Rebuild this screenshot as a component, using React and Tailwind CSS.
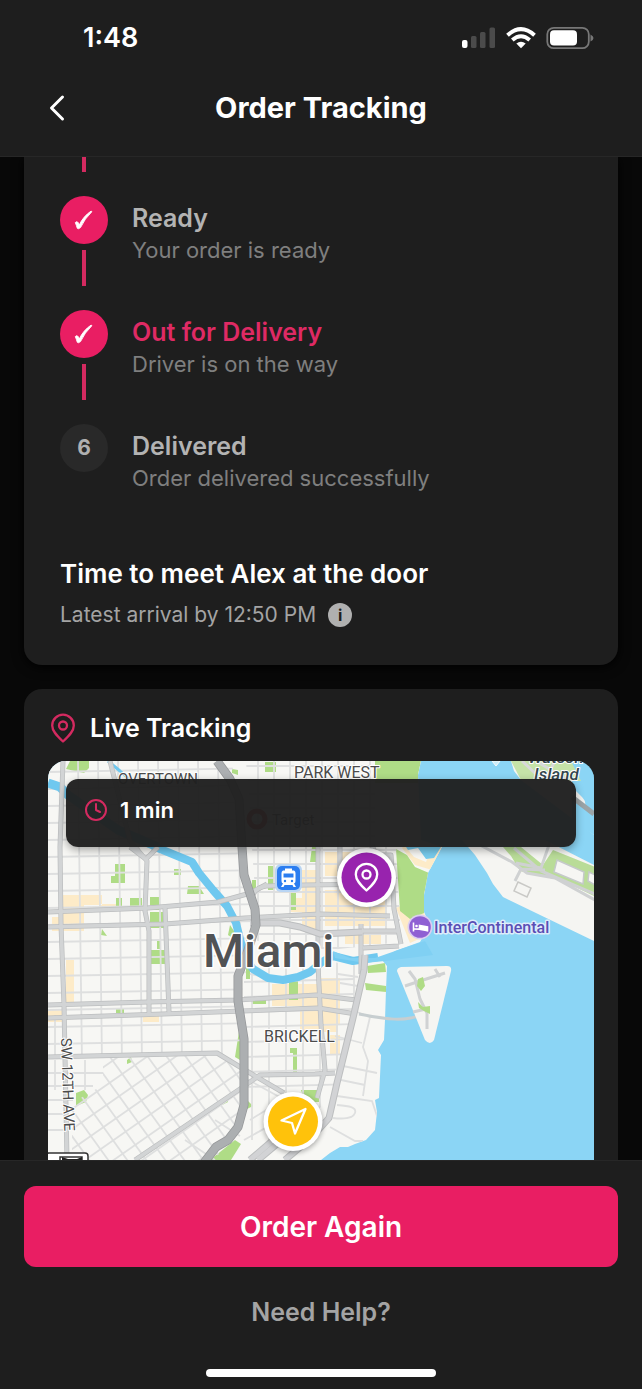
import { Clock } from "lucide-react";

const steps = [
  { title: "Ready", text: "Your order is ready", state: "done" },
  { title: "Out for Delivery", text: "Driver is on the way", state: "current" },
  { title: "Delivered", text: "Order delivered successfully", state: "todo", number: 6 },
];

function StatusBar() {
  return (
    <div className="flex h-[76px] items-center justify-between pr-12 pl-[83px] text-white">
      <span className="text-[27px] leading-8 font-semibold">1:48</span>
      <svg className="h-7 w-[134px]" viewBox="460 24 134 28" aria-label="Signal, Wi-Fi and battery">
        <rect x="462" y="40" width="5.5" height="8" rx="2" fill="#fff" />
        <rect x="471" y="36" width="5.5" height="12" rx="1.5" fill="#4b4b4b" />
        <rect x="480" y="32" width="5.5" height="16" rx="1.5" fill="#4b4b4b" />
        <rect x="489.500" y="27.500" width="5.500" height="20.500" rx="1.500" fill="#4b4b4b" />
        <g fill="none" stroke="#fff" strokeWidth="4">
          <path d="M507.500 35.200Q521 23 534.500 35.200" />
          <path d="M512.300 39.900Q521 32.500 529.700 39.900" />
        </g>
        <path d="M516.300 43.500Q521 39.800 525.700 43.500L521 48.200Z" fill="#fff" />
        <rect x="547.300" y="27.800" width="41.500" height="20.400" rx="6.500" fill="none" stroke="#777" strokeWidth="1.800" />
        <rect x="550" y="30.300" width="27" height="15.300" rx="4" fill="#fff" />
        <path d="M590.500 34.500Q593.500 36 593.500 38T590.500 41.500Z" fill="#777" />
      </svg>
    </div>
  );
}

function Step({ step, last }) {
  const done = step.state !== "todo";
  return (
    <li className="flex gap-6">
      <div className="flex w-12 shrink-0 flex-col items-center">
        <div className={done ? "flex size-12 items-center justify-center rounded-full bg-[#e91e63] text-white" : "flex size-12 items-center justify-center rounded-full bg-[#292929] text-[#b0b0b0]"}>
          {done ? (
            <svg viewBox="0 0 48 48" className="size-12" aria-label="Completed">
              <path d="M15.300 26.600Q17.600 24 19.300 29Q23 20.500 31.200 15L31.800 15.800Q24.800 22.500 20.500 31.600Q18.300 33.500 17.300 32.300Q16.500 29.500 15.300 26.600Z" fill="currentColor" stroke="currentColor" strokeWidth="0.900" strokeLinejoin="round" />
            </svg>
          ) : (
            <span className="text-[21px] leading-6 font-bold">{step.number}</span>
          )}
        </div>
        {!last && <div className="mt-1.5 mb-6 h-9 w-1 bg-[#d42a60]" />}
      </div>
      <div className="pt-1">
        <h2 className={step.state === "current" ? "text-[25px] leading-9 font-semibold text-[#df2a64]" : "text-[25px] leading-9 font-semibold text-[#b3b3b3]"}>{step.title}</h2>
        <p className="text-[22px] leading-7 text-[#7f7f7f]">{step.text}</p>
      </div>
    </li>
  );
}

const range = (from, to, by) => Array.from({ length: Math.floor((to - from) / by) + 1 }, (_, i) => from + i * by);

function CityMap() {
  return (
    <svg className="block h-[399px] w-full" viewBox="48 761 546 399" preserveAspectRatio="xMidYMid slice" role="img" aria-label="Map of Miami">
      <defs>
        <clipPath id="land">
          <path d="M48 761H421L418 775L421 840L442 847L428 873L424 895L424 912L430 925L420 942L395 951L382 960L387 966L386 990L385 1020L384 1040L378 1050L381 1055L379 1098L375 1100L377 1112L375 1130L366 1140L355 1144L348 1147L340 1147L330 1153L321 1160H48Z" />
        </clipPath>
        <clipPath id="west">
          <path d="M48 761H232L245 870L258 915L240 1000V1055L217 1054L48 1058Z" />
        </clipPath>
        <clipPath id="southwest">
          <path d="M103 1058L217 1055L240 1068V1120L215 1160H72V1103L103 1085Z" />
        </clipPath>
        <clipPath id="downtown">
          <path d="M246 761H375V847H396L401 942L330 950L250 940L256 905Z" />
        </clipPath>
        <clipPath id="brickell">
          <path d="M250 950L360 966L345 1045L332 1100L240 1160V1000Z" />
        </clipPath>
        <clipPath id="dodge">
          <path d="M462 840L475 855L487 873L493 884L503 897L594 941V865L545 840Z" />
        </clipPath>
        <filter id="soft"><feGaussianBlur stdDeviation="2.500" /></filter>
      </defs>

      <rect x="48" y="761" width="546" height="399" fill="#8bd5f5" />
      <g clipPath="url(#land)">
        <rect x="48" y="761" width="546" height="399" fill="#f7f7f4" />

        <g fill="#fdebc8">
          <path d="M62 895h40v10h-18v26h-32v-14h10zM80 901h20v8h18v-5h-18zM66 960h8v46h-8zM48 1010h15v12H48zM143 1016h16v6h-16zM290 898h28v14h-28zM302 870h14v60h-14zM325 852h50v24h-50zM325 890h60v36h-60zM345 930h36v14h-36zM272 984h48v22h-48zM318 978h22v46h-22zM300 998h38v34h-38zM330 1035h10v20h-10zM396 908l10-5 18 8 4 24-18 8z" />
          <path d="M402 848l13 17 17 5 10-23h-10l-6 15-12-5-10-12z" />
        </g>
        <g fill="#afdc86">
          <path d="M375 761h46l-3 14v8h-43zM396 849l11 6 8 12 14 6-5 22v18l-14 6-10-8z" />
          <path d="M70 761h19v7l-5 5-18-4zM115 864h10v19h-14v-7h4zM116 898h6v10h-6zM130 898h12v10h-12zM150 897h10v13h-10zM150 912h16v16h-16zM151 950h16v14h-16zM157 941h3v8h-3zM174 869h7v6h-7zM188 886h11l5 8h-17zM102 929l5 7-6-1zM116 1009h8v4h-8zM268 866h6v24h-6zM252 880h4v12h-4zM290 886h6v24h-6zM265 762h11v10h-11zM232 769l6 1 0 5-6-2zM312 847h4v15h-6zM289 975h9v25h-9zM252 1000h14v4h-14zM246 965h4v14h-4zM230 925l4 6v8l-6-4zM76 1093l8-3 4 5-2 7-10 4zM127 1060l4-3 1 5-5 2zM220 1102l8-5v5l-6 3zM240 1025l6 0-1 38-10-6zM245 1098l8 8-8 4zM210 1160l25-20 6 4-10 16zM290 1048h7v25h-4v-20h-3zM301 1090h18v12h-14zM367 966l18-3 1 9-18 1zM365 983l21 3v6l-20-2z" />
        </g>

        <g stroke="#dedfdf" strokeWidth="1.800" fill="none">
          <g clipPath="url(#west)">
            {range(78, 240, 20).map((x) => <path key={x} d={`M${x} 761l4 300`} />)}
            {range(770, 1060, 17).map((y) => <path key={y} d={`M48 ${y + 2}L260 ${y - 2}`} />)}
          </g>
          <g clipPath="url(#southwest)">
            {range(0, 20, 1).map((n) => <path key={n} d={`M${10 + n * 19} 1050l90 125`} />)}
            {range(0, 16, 1).map((n) => <path key={n} d={`M48 ${1066 + n * 20}l200 -140`} />)}
          </g>
          <g clipPath="url(#downtown)">
            {range(258, 400, 16).map((x) => <path key={x} d={`M${x} 761v190`} />)}
            {range(766, 950, 14).map((y) => <path key={y} d={`M244 ${y}h160`} />)}
          </g>
          <g clipPath="url(#brickell)">
            {range(252, 360, 17).map((x) => <path key={x} d={`M${x} 960v180`} />)}
            {range(982, 1100, 15).map((y) => <path key={y} d={`M244 ${y}l110 -3`} />)}
          </g>
          <path d="M48 1073h55M48 1086h45M48 1100h25M48 1114h16M48 1130h16M55 1060v30M55 1015v40M85 1060v30M245 1078l40 22M250 1120l26-16M244 1140l50-28M215 1120l25 16M185 1140l30 20" />
          <path d="M357 1012l13 5-7 30 5 14-5 35M335 1036l27 7M343 1066l34 7M341 1080l24 5M337 1096l35 5 5 15M337 1105c12 1 20 2 18 8s-14 6-22 5M330 1127l25 14 8 0M250 974l30 6M338 974l20 3M340 983l18 3" />
        </g>
      </g>

      <g fill="none" stroke="#6fc8ef" strokeLinejoin="round">
        <path d="M48 783l12 4 8 8 50 35 40 17" strokeWidth="9" />
        <path d="M108 761l12 10 9 8" strokeWidth="3" />
        <path d="M153 846l17 7 22 9 7 11 14 17 14 16 9 17 5 20 3 13 9 13 15 9 15 2 15-3 12-5 12-10 11-6 20 5 25-4" strokeWidth="8" />
      </g>
      <path d="M333 951l17 7 25 0 26-9 24-8 8 14-48 6-20 2-30-5z" fill="#80d0f3" />
      <path d="M408 850l10-2 8 11 8-1 7-11h-35z" fill="#77cbed" />

      <g fill="none" strokeLinejoin="round">
        <g stroke="#bcbebf" strokeWidth="5">
          <path d="M63 761L60 847L61 925L64 1005L67 1160M110 761l20 80 17 20-2 50 4 20v82M165 908l4 104M158 847l-12 12M130 847l17 13" />
          <path d="M48 912l100-4 70-6 29-8 11-5 9-5M48 927l117-3 80-6 75-4 70 2M48 1005l100-3 90-2 78-5 40 5M48 1018l115-4 155-6 38 6" />
          <path d="M48 1057l169-4 28 17 39 23M135 1160l105-71 20-14 55-1 20-1M253 895q2-7 13-9l40-1 80-1M318 845v120l3 60 4 45-8 28M340 847v30M361 924v50M372 845l4 10 15 0 3 54 7 35M361 931h38M363 948l36-2" />
        </g>
        <g stroke="#d2d4d5" strokeWidth="3.600">
          <path d="M63 761L60 847L61 925L64 1005L67 1160M110 761l20 80 17 20-2 50 4 20v82M165 908l4 104M158 847l-12 12M130 847l17 13" />
          <path d="M48 912l100-4 70-6 29-8 11-5 9-5M48 927l117-3 80-6 75-4 70 2M48 1005l100-3 90-2 78-5 40 5M48 1018l115-4 155-6 38 6" />
          <path d="M48 1057l169-4 28 17 39 23M135 1160l105-71 20-14 55-1 20-1M253 895q2-7 13-9l40-1 80-1M318 845v120l3 60 4 45-8 28M340 847v30M361 924v50M372 845l4 10 15 0 3 54 7 35M361 931h38M363 948l36-2" />
        </g>
        <path d="M365 955l-1 15-11 48-16 65-8 35-17 19-27 23M250 923h30l20 4 20 7 42-2M285 1130l-35 30M258 1160l45-38" stroke="#bcbebf" strokeWidth="7" />
        <path d="M365 955l-1 15-11 48-16 65-8 35-17 19-27 23M250 923h30l20 4 20 7 42-2M285 1130l-35 30M258 1160l45-38" stroke="#d2d3d5" strokeWidth="5" />
        <path d="M217 761l13 18 9 20 3 48 2 28 11 34 1 16-8 25-10 26 0 25 6 38 0 66-6 22-10 13-12 7-13 17" stroke="#96989a" strokeWidth="9" />
        <path d="M217 761l13 18 9 20 3 48 2 28 11 34 1 16-8 25-10 26 0 25 6 38 0 66-6 22-10 13-12 7-13 17" stroke="#acafb1" strokeWidth="7.500" />
      </g>

      <g>
        <path d="M511 761l3 10 7 9 73 55V813l-12-16-10-10v-26z" fill="#f4f4f1" />
        <path d="M511 761h60l10 20-60-1z" fill="#c5e3a8" />
        <path d="M522 761l15 14M536 761l32 19M555 761l-10 19" stroke="#d8d9da" strokeWidth="3" />
        <path d="M492 761l4 5 4-5z" fill="#c9edf9" stroke="#f8f8f8" />
        <path d="M582 782l12-8v35h-8z" fill="#8bd5f5" />
        <path d="M572 797l22 15v23l-22-14z" fill="#8bd5f5" />
        <path d="M572 797l22 17" stroke="#9ba4a7" strokeWidth="5" />
        <g clipPath="url(#dodge)">
          <rect x="455" y="840" width="140" height="105" fill="#f5f5f2" />
          <path d="M503 847l18 0 22 18 10-15 45 18v30l-35-17-43-10-9-15z" fill="#b9dc98" />
          <path d="M480 845l32 17 15 11 28 5 40 22M550 842l-9 26-25-5M545 870l-24-1-6 12M514 848l27 23 54 23" fill="none" stroke="#cfd1d2" strokeWidth="3" />
          <path d="M557 860l27 12-1 12-29-12z" fill="#f6f6f3" stroke="#c5c9ca" strokeWidth="1.500" />
          <path d="M589 872l6 3v10l-7-4z" fill="#f6f6f3" stroke="#c5c9ca" strokeWidth="1.500" />
          <path d="M518 882l13 6-4 9-13-6z" fill="#f5f5f2" stroke="#c9c9c6" strokeWidth="1.500" />
        </g>
      </g>

      <path d="M359 1014c25 5 48 9 66-1" fill="none" stroke="#c7ced0" strokeWidth="3" />
      <path d="M397 971q0-3 4-4l46-1q5 0 4 5l-17 69q-4 6-9 0z" fill="#f5f5f2" />
      <g fill="none" stroke="#d0d2d3" strokeWidth="3">
        <path d="M409 971l6 8 5 20 7 14 0 16M405 986l12-4 28-9M435 969l5 8M413 1012l13-3" />
      </g>
      <path d="M418 979l5-2 2 9-4 5-4-5zM418 1002l5 5 7-1 0 8-6-3-5-3z" fill="#afdc86" />

      <g fontFamily="Roboto, sans-serif" stroke="#fff" strokeLinejoin="round" paintOrder="stroke">
        <g fontSize="15" fill="#4b4b4b" strokeWidth="2">
          <text x="118" y="784" fontSize="15">OVERTOWN</text>
          <text x="294" y="778" fontSize="16">PARK WEST</text>
          <text x="264" y="1042" fontSize="16">BRICKELL</text>
          <text fontSize="15" transform="translate(61 1038) rotate(88)">SW 12TH AVE</text>
        </g>
        <g fill="#33464e" strokeWidth="2" fontWeight="500" fontStyle="italic" fontSize="17">
          <text x="528" y="763">Watson</text>
          <text x="534" y="780">Island</text>
        </g>
        <text x="203" y="967" fontSize="47" fontWeight="500" fill="#515355" strokeWidth="3">Miami</text>
        <text x="434" y="933" fontSize="16" fontWeight="500" fill="#5a4fb5" stroke="#dcecfb" strokeWidth="3">InterContinental</text>
        <text x="272" y="825" fontSize="15" fill="#444" strokeWidth="2">Target</text>
      </g>
      <circle cx="257" cy="819" r="8" fill="none" stroke="#cc2727" strokeWidth="5" />

      <rect x="275" y="864" width="27" height="28" rx="6" fill="#b9d5f3" />
      <rect x="277" y="866" width="23" height="24" rx="5" fill="#2b7df0" />
      <path d="M285 868.500h7v2h2q1.500.5 1.500 2.500v8q0 2-1.500 2.500l2 3.500h-2.500l-1-2h-8l-1 2H281l2-3.500q-1.500-.5-1.500-2.500v-8q0-2 1.500-2.500h2z" fill="#fff" />
      <path d="M283.500 873.500h10v4h-10z" fill="#2b7df0" />
      <circle cx="285" cy="881" r="1.200" fill="#2b7df0" />
      <circle cx="292" cy="881" r="1.200" fill="#2b7df0" />

      <circle cx="420" cy="927" r="12.500" fill="#dccdf1" />
      <circle cx="420" cy="927" r="10.800" fill="#8f5fd3" />
      <path d="M413.500 922.500v9M413.500 929h14v2.500M427.500 928v-1l-8-1.500v2.500z" stroke="#fff" strokeWidth="1.600" fill="#fff" />
      <circle cx="416.500" cy="926" r="1.300" fill="#fff" />

      <g fill="#fff" stroke="#333" strokeWidth="1.500">
        <rect x="46" y="1153" width="42" height="14" rx="3" />
        <path d="M60 1157h22v8H60z" />
      </g>
      <path d="M62 1157l6 2h9l5-2v4H62z" fill="#222" />

      <circle cx="366.500" cy="879" r="31" fill="#000" opacity=".3" filter="url(#soft)" />
      <circle cx="366.500" cy="877.500" r="29.500" fill="#fff" />
      <circle cx="366.500" cy="877.500" r="25" fill="#9823ae" />
      <g fill="none" stroke="#fff" strokeWidth="2.300" strokeLinejoin="round">
        <path d="M366.500 890.500C360 884.500 355.800 880 355.800 874.500a10.700 10.700 0 0 1 21.400 0c0 5.500-4.200 10-10.700 16z" />
        <circle cx="366.500" cy="874.500" r="4" />
      </g>
      <circle cx="293" cy="1123" r="30" fill="#000" opacity=".3" filter="url(#soft)" />
      <circle cx="293" cy="1121.500" r="29.500" fill="#fff" />
      <circle cx="293" cy="1121.500" r="25" fill="#ffc20b" />
      <path d="M305.500 1109L281.500 1120.500l10.500 2.500 3 10.500z" fill="none" stroke="#fff" strokeWidth="2.300" strokeLinejoin="round" />
    </svg>
  );
}

export default function App() {
  return (
    <div className="flex min-h-screen flex-col bg-[#080808] font-[Inter,sans-serif]">
      <header className="z-10 border-b border-[#272727] bg-[#1e1e1e]">
        <StatusBar />
        <div className="grid h-20 grid-cols-[64px_1fr_64px] items-start px-6 pt-2">
          <button type="button" aria-label="Back" className="flex size-12 items-center justify-end pr-1.5 text-white">
            <svg viewBox="0 0 18 28" className="h-7 w-[18px]" aria-hidden="true">
              <path d="M14.500 3L3.500 14L14.500 25" fill="none" stroke="currentColor" strokeWidth="3" strokeLinecap="round" strokeLinejoin="round" />
            </svg>
          </button>
          <h1 className="text-center text-[29px] leading-[48px] font-bold text-white">Order Tracking</h1>
        </div>
      </header>

      <main className="flex flex-1 flex-col gap-6 px-6">
        <section className="rounded-b-[18px] bg-[#1e1e1e] px-9 pb-8 shadow-[0_2px_12px_#000]">
          <div className="mb-6 flex w-12 justify-center">
            <div className="h-[15px] w-1 bg-[#d42a60]" />
          </div>
          <ol>
            {steps.map((step, i) => (
              <Step key={step.title} step={step} last={i === steps.length - 1} />
            ))}
          </ol>
          <h2 className="mt-16 text-[26px] leading-9 font-semibold text-white">Time to meet Alex at the door</h2>
          <div className="mt-1 flex items-center gap-3">
            <p className="text-[21px] leading-[37px] text-[#a4a4a4]">Latest arrival by 12:50 PM</p>
            <button type="button" aria-label="Arrival details" className="size-6 rounded-full bg-[#b0b0b0] text-center text-base leading-6 font-bold text-[#1e1e1e]">i</button>
          </div>
        </section>

        <section className="flex-1 rounded-t-[18px] bg-[#1e1e1e] px-6 pt-4">
          <div className="flex h-14 items-start gap-3">
            <svg viewBox="0 0 30 48" className="h-12 w-[30px]" aria-hidden="true">
              <g fill="none" stroke="#d42a60" strokeWidth="2.300" strokeLinejoin="round">
                <path d="M15 36.500C8.500 30.500 4.200 26 4.200 20.500a10.800 10.800 0 0 1 21.600 0c0 5.500-4.300 10-10.800 16z" />
                <circle cx="15" cy="20.500" r="4" />
              </g>
            </svg>
            <h2 className="text-[25px] leading-[46px] font-semibold text-white">Live Tracking</h2>
          </div>
          <div className="relative overflow-hidden rounded-t-[18px]">
            <CityMap />
            <div className="absolute inset-x-[18px] top-[18px] flex h-[68px] items-start gap-3 rounded-xl bg-[#202020]/97 px-[18px] pt-4 shadow-[0_3px_8px_#0005]">
              <Clock className="mt-[3px] size-6 text-[#d42a60]" strokeWidth={2} />
              <span className="text-[22px] leading-[30px] font-semibold text-white">1 min</span>
            </div>
          </div>
        </section>
      </main>

      <footer className="flex flex-col items-center border-t border-[#272727] bg-[#1e1e1e] px-6 pt-[25px] pb-3">
        <button type="button" className="h-[81px] w-full rounded-xl bg-[#e91e63] text-[28px] font-semibold text-white">Order Again</button>
        <a href="#help" className="mt-6 text-[25px] leading-[42px] font-semibold text-[#a4a4a4]">Need Help?</a>
        <div className="mt-9 h-2 w-[230px] rounded-full bg-white" />
      </footer>
    </div>
  );
}
